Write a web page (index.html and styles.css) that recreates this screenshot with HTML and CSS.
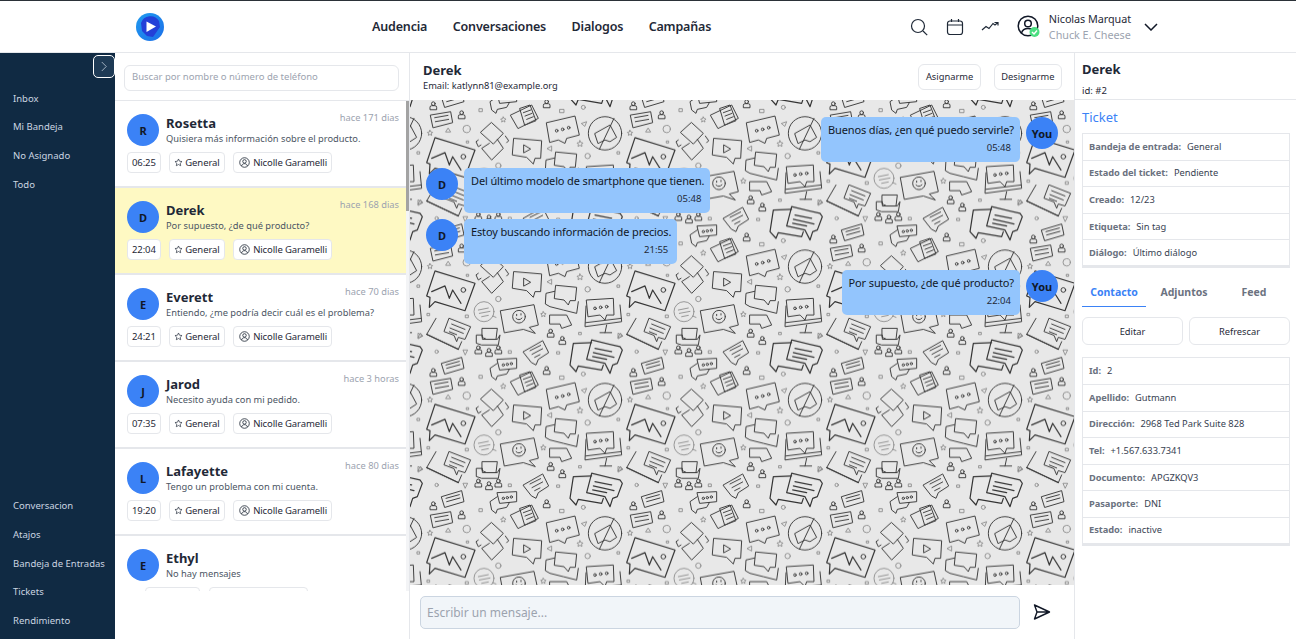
FILE: index.html
```html
<!DOCTYPE html>
<html lang="es">
<head>
  <meta charset="UTF-8" />
  <meta name="viewport" content="width=device-width, initial-scale=1.0" />
  <title>Conversaciones</title>
  <link rel="stylesheet" href="styles.css">
</head>
<body>
  <header class="topbar">
    <svg class="logo" viewBox="0 0 28 28">
      <defs>
        <linearGradient id="logo-grad" x1="0" y1="0" x2="1" y2="1">
          <stop offset="0" stop-color="#1f9bf0" />
          <stop offset="1" stop-color="#1d6fe8" />
        </linearGradient>
      </defs>
      <circle cx="14" cy="14" r="14" fill="url(#logo-grad)" />
      <path d="M5 10a10 10 0 0 1 18-2l1 6-7 10-6-1-5-5z" fill="#2340d8" />
      <path d="M10.5 8.5 20 13.5 10.5 19z" fill="#fff" />
    </svg>
    <nav class="topnav">
      <a>Audencia</a>
      <a>Conversaciones</a>
      <a>Dialogos</a>
      <a>Campañas</a>
    </nav>
    <div class="top-actions">
      <svg class="ico" viewBox="0 0 18 18"><circle cx="8" cy="8" r="6.5" /><path d="M13 13l4.2 4.2" /></svg>
      <svg class="ico" viewBox="0 0 18 18"><rect x="1.5" y="3" width="15" height="13.5" rx="2.5" /><path d="M1.5 7h15M5.5 1v3M12.5 1v3" /></svg>
      <svg class="ico" viewBox="0 0 18 18"><path d="M1 12l4-3.5 3 2 4-5 2 1.5 3-2.5M13.5 4.500h3.500v3" /></svg>
      <div class="profile">
        <svg class="profile-ico" viewBox="0 0 24 24">
          <circle cx="11" cy="11" r="9.800" />
          <circle cx="11" cy="8.500" r="3.300" />
          <path d="M4.500 18c1-3.500 3.500-4.500 6.500-4.500s4.500.5 5.500 2" />
          <circle cx="17.500" cy="17" r="5" class="badge" />
          <path d="M15 17l2 2 3-3.500" class="tick" />
        </svg>
        <div class="profile-text">
          <span>Nicolas Marquat</span>
          <span class="profile-org">Chuck E. Cheese</span>
        </div>
      </div>
      <svg class="chev" viewBox="0 0 14 8"><path d="M1 1l6 6 6-6" /></svg>
    </div>
  </header>

  <div class="app">
    <aside class="sidebar">
      <button class="side-toggle"><svg viewBox="0 0 8 14"><path d="M1 1l6 6-6 6" /></svg></button>
      <div class="side-group">
        <a>Inbox</a>
        <a>Mi Bandeja</a>
        <a>No Asignado</a>
        <a>Todo</a>
      </div>
      <div class="side-group">
        <a>Conversacion</a>
        <a>Atajos</a>
        <a>Bandeja de Entradas</a>
        <a>Tickets</a>
        <a>Rendimiento</a>
      </div>
    </aside>

    <section class="tickets">
      <div class="search-box">
        <input type="text" placeholder="Buscar por nombre o número de teléfono" />
      </div>
      <div class="tickets-body">
        <div class="ticket-list">
          <div class="ticket">
            <div class="avatar">R</div>
            <div class="ticket-main">
              <div class="ticket-top"><h3>Rosetta</h3><span class="ago">hace 171 dias</span></div>
              <p>Quisiera más información sobre el producto.</p>
            </div>
            <div class="chips">
              <span class="chip">06:25</span>
              <span class="chip"><svg class="star" viewBox="0 0 12 12"><use href="#i-star" /></svg>General</span>
              <span class="chip"><svg viewBox="0 0 12 12"><use href="#i-user" /></svg>Nicolle Garamelli</span>
            </div>
          </div>
          <div class="ticket active">
            <div class="avatar">D</div>
            <div class="ticket-main">
              <div class="ticket-top"><h3>Derek</h3><span class="ago">hace 168 dias</span></div>
              <p>Por supuesto, ¿de qué producto?</p>
            </div>
            <div class="chips">
              <span class="chip">22:04</span>
              <span class="chip"><svg class="star" viewBox="0 0 12 12"><use href="#i-star" /></svg>General</span>
              <span class="chip"><svg viewBox="0 0 12 12"><use href="#i-user" /></svg>Nicolle Garamelli</span>
            </div>
          </div>
          <div class="ticket">
            <div class="avatar">E</div>
            <div class="ticket-main">
              <div class="ticket-top"><h3>Everett</h3><span class="ago">hace 70 dias</span></div>
              <p>Entiendo, ¿me podría decir cuál es el problema?</p>
            </div>
            <div class="chips">
              <span class="chip">24:21</span>
              <span class="chip"><svg class="star" viewBox="0 0 12 12"><use href="#i-star" /></svg>General</span>
              <span class="chip"><svg viewBox="0 0 12 12"><use href="#i-user" /></svg>Nicolle Garamelli</span>
            </div>
          </div>
          <div class="ticket">
            <div class="avatar">J</div>
            <div class="ticket-main">
              <div class="ticket-top"><h3>Jarod</h3><span class="ago">hace 3 horas</span></div>
              <p>Necesito ayuda con mi pedido.</p>
            </div>
            <div class="chips">
              <span class="chip">07:35</span>
              <span class="chip"><svg class="star" viewBox="0 0 12 12"><use href="#i-star" /></svg>General</span>
              <span class="chip"><svg viewBox="0 0 12 12"><use href="#i-user" /></svg>Nicolle Garamelli</span>
            </div>
          </div>
          <div class="ticket">
            <div class="avatar">L</div>
            <div class="ticket-main">
              <div class="ticket-top"><h3>Lafayette</h3><span class="ago">hace 80 dias</span></div>
              <p>Tengo un problema con mi cuenta.</p>
            </div>
            <div class="chips">
              <span class="chip">19:20</span>
              <span class="chip"><svg class="star" viewBox="0 0 12 12"><use href="#i-star" /></svg>General</span>
              <span class="chip"><svg viewBox="0 0 12 12"><use href="#i-user" /></svg>Nicolle Garamelli</span>
            </div>
          </div>
          <div class="ticket">
            <div class="avatar">E</div>
            <div class="ticket-main">
              <div class="ticket-top"><h3>Ethyl</h3></div>
              <p>No hay mensajes</p>
            </div>
            <div class="chips chips-end">
              <span class="chip"><svg class="star" viewBox="0 0 12 12"><use href="#i-star" /></svg>General</span>
              <span class="chip"><svg viewBox="0 0 12 12"><use href="#i-user" /></svg>Nicolle Garamelli</span>
            </div>
          </div>
        </div>
        <div class="scroll-track"><div class="scroll-thumb"></div></div>
      </div>
    </section>

    <section class="chat">
      <div class="chat-head">
        <div class="chat-who">
          <h2>Derek</h2>
          <span>Email: katlynn81@example.org</span>
        </div>
        <button class="btn">Asignarme</button>
        <button class="btn">Designarme</button>
      </div>

      <div class="chat-body">
        <!-- doodle wallpaper, tile coords are 3x, scaled down below -->
        <svg class="wallpaper" width="100%" height="100%">
          <defs>
            <g id="d-person">
              <circle cx="0" cy="-7" r="5.500" />
              <path d="M-10 10V4q0-5 5-5H5q5 0 5 5v6z" />
            </g>
            <g id="d-tile" class="doodle">
              <path class="thick" d="M75 313 195 350 165 432 75 405 58 422 60 392 50 388z" />
              <path class="thick" d="M65 375 105 358 118 395 128 370 153 410" /><circle cx="160" cy="370" r="7" />
              <g class="pale"><circle cx="222" cy="35" r="30" /><path d="M205 30 235 24M208 40 240 34M215 50 235 46M248 48 258 52" /></g>
              <path d="M272 32 372 14 385 75 358 82 376 100 340 88 284 98z" />
              <circle cx="327" cy="50" r="19" /><path d="M318 55q9 9 18-1M320 43v4M333 41v4" />
              <path d="M78 55 50 103 145 148 155 125" /><path class="thick" d="M50 103 145 148" />
              <path d="M118 55 182 80 165 118 145 112 140 125 132 106 103 95z" /><path d="M125 72 165 88M120 84 160 100M118 95 140 104" />
              <path d="M217 85 262 85 258 118 230 118 217 112z" /><path d="M200 105 217 105 217 118 262 118 270 105 265 135 215 135 200 130z" />
              <use href="#d-person" x="205" y="150" /><use href="#d-person" x="237" y="158" /><use href="#d-person" x="265" y="150" />
              <path d="M340 155 398 122 416 158 385 178 378 195 365 188z" /><path d="M360 152 392 136M366 163 398 146M374 172 390 164" />
              <use href="#d-person" x="410" y="212" />
              <path d="M262 178 320 175 320 205 270 210z" /><path d="M262 190 240 205 245 230 258 240 262 228 290 222 298 208" />
              <circle cx="280" cy="195" r="3.500" /><circle cx="292" cy="193" r="3.500" /><circle cx="304" cy="191" r="3.500" />
              <path d="M302 245 365 215 385 255 325 285z" /><path d="M330 225 360 215 378 262 345 275z" /><path d="M340 238 362 230M345 248 366 240M350 258 370 250" />
              <path class="thick" d="M490 130 545 128M490 130 480 195 498 215 505 198 575 210 580 195" />
              <path class="thick" d="M545 120 630 140 637 150 622 190 608 195 600 220 585 190 530 178z" />
              <path class="thick" d="M555 145 605 155M550 158 612 172M548 170 590 178" />
              <path d="M95 190 155 172 162 205 105 222z" /><path d="M108 195 148 184M110 205 150 194" />
              <path d="M62 245 122 235 128 268 70 283z" /><path d="M74 253 114 246M76 265 116 258" />
              <use href="#d-person" x="70" y="218" /><use href="#d-person" x="155" y="245" />
              <path d="M410 268 495 248 508 305 470 315 465 330 445 320 420 327z" />
              <circle cx="440" cy="292" r="4" /><circle cx="458" cy="288" r="4" /><circle cx="476" cy="283" r="4" />
              <circle cx="585" cy="300" r="50" /><path d="M555 300 600 275 620 312 600 325 585 320 565 330z" /><path d="M612 255 568 348" />
              <path d="M245 268 280 300 250 332 212 298z" /><path d="M238 330 215 345 245 380 280 345 262 318" />
              <path d="M205 320 198 325 205 340 213 335M290 328 296 322 286 308" />
              <path d="M312 315 395 322 392 375 375 375 370 392 350 372 308 365z" /><path d="M342 335 362 347 342 358z" />
              <path d="M438 356 500 362 496 402 480 402 475 415 462 400 434 396z" /><path d="M434 374 408 380 406 412 420 420 460 430 500 440 505 405" />
              <path d="M530 0 610 -5 612 45 590 45 585 60 570 45 535 50z" /><path d="M528 18 525 80 635 65 630 15" /><path d="M527 68 633 55M590 75 585 98M570 98 605 98" />
              <circle cx="555" cy="25" r="4" /><circle cx="572" cy="22" r="4" /><circle cx="590" cy="20" r="4" />
              <path d="M420 45 470 45 485 75 455 85 450 72 420 72z" />
              <use href="#d-person" x="422" y="100" /><use href="#d-person" x="457" y="122" />
              <g class="pale">
                <path d="M25 100 38 108 25 116zM160 150 173 150 166 164zM108 296 122 296 115 285zM515 270 530 265 525 278zM412 345 425 338 425 352zM625 112 638 108 632 100z" />
                <circle cx="170" cy="287" r="11" /><circle cx="265" cy="397" r="8" /><circle cx="533" cy="368" r="8" /><circle cx="520" cy="222" r="6" /><circle cx="80" cy="155" r="5" />
                <path d="M60 291 63 296 68 297 64 301 65 306 60 303 55 306 56 301 52 297 57 296zM510 322 513 328 519 329 515 333 516 339 510 336 504 339 505 333 501 329 507 328zM400 35 403 40 408 41 404 45 405 50 400 47 395 50 396 45 392 41 397 40zM280 251 283 256 288 257 284 261 285 266 280 263 275 266 276 261 272 257 277 256z" />
                <rect x="52" y="40" width="7" height="7" /><rect x="167" y="45" width="8" height="8" /><rect x="208" y="226" width="9" height="9" /><rect x="441" y="155" width="8" height="7" /><rect x="450" y="228" width="12" height="10" /><rect x="296" y="152" width="8" height="8" /><rect x="507" y="97" width="7" height="7" /><rect x="622" y="355" width="7" height="7" /><rect x="170" y="323" width="6" height="6" />
              </g>
            </g>
            <pattern id="wall" patternUnits="userSpaceOnUse" width="200" height="133.333" y="66.667">
              <g transform="scale(.33333)">
                <use href="#d-tile" />
                <use href="#d-tile" x="-600" />
                <use href="#d-tile" x="600" />
                <use href="#d-tile" y="-400" />
                <use href="#d-tile" y="400" />
                <use href="#d-tile" x="-600" y="400" />
                <use href="#d-tile" x="600" y="-400" />
              </g>
            </pattern>
          </defs>
          <rect width="100%" height="100%" fill="url(#wall)" />
        </svg>

        <div class="messages">
          <div class="msg mine">
            <div class="bubble"><p>Buenos días, ¿en qué puedo servirle?</p><time>05:48</time></div>
            <div class="avatar">You</div>
          </div>
          <div class="msg">
            <div class="avatar">D</div>
            <div class="bubble"><p>Del último modelo de smartphone que tienen.</p><time>05:48</time></div>
          </div>
          <div class="msg">
            <div class="avatar">D</div>
            <div class="bubble"><p>Estoy buscando información de precios.</p><time>21:55</time></div>
          </div>
          <div class="msg mine">
            <div class="bubble"><p>Por supuesto, ¿de qué producto?</p><time>22:04</time></div>
            <div class="avatar">You</div>
          </div>
        </div>
      </div>

      <div class="composer">
        <input type="text" placeholder="Escribir un mensaje..." />
        <svg class="send" viewBox="0 0 18 18"><path d="M1.500 2 16.500 9 1.500 16 4 9zM4 9h12.500" /></svg>
      </div>
    </section>

    <aside class="details">
      <div class="details-head">
        <h2>Derek</h2>
        <span>id: #2</span>
      </div>
      <div class="details-body">
        <h4 class="ticket-title">Ticket</h4>
        <dl class="info">
          <div><dt>Bandeja de entrada:</dt><dd>General</dd></div>
          <div><dt>Estado del ticket:</dt><dd>Pendiente</dd></div>
          <div><dt>Creado:</dt><dd>12/23</dd></div>
          <div><dt>Etiqueta:</dt><dd>Sin tag</dd></div>
          <div><dt>Diálogo:</dt><dd>Último diálogo</dd></div>
        </dl>
        <div class="tabs">
          <a class="tab on">Contacto</a>
          <a class="tab">Adjuntos</a>
          <a class="tab">Feed</a>
        </div>
        <div class="detail-btns">
          <button class="btn">Editar</button>
          <button class="btn">Refrescar</button>
        </div>
        <dl class="info">
          <div><dt>Id:</dt><dd>2</dd></div>
          <div><dt>Apellido:</dt><dd>Gutmann</dd></div>
          <div><dt>Dirección:</dt><dd>2968 Ted Park Suite 828</dd></div>
          <div><dt>Tel:</dt><dd>+1.567.633.7341</dd></div>
          <div><dt>Documento:</dt><dd>APGZKQV3</dd></div>
          <div><dt>Pasaporte:</dt><dd>DNI</dd></div>
          <div><dt>Estado:</dt><dd>inactive</dd></div>
        </dl>
      </div>
    </aside>
  </div>

  <svg class="sprites" width="0" height="0">
    <g id="i-star"><path d="M6 1.300 7.400 4.300 10.700 4.700 8.300 7 8.900 10.300 6 8.700 3.100 10.300 3.700 7 1.300 4.700 4.600 4.300z" /></g>
    <g id="i-user"><circle cx="6" cy="6" r="5.200" /><circle cx="6" cy="4.800" r="1.900" /><path d="M2.800 9.800c.6-2 1.800-2.500 3.200-2.500s2.600.5 3.200 2.500" /></g>
  </svg>
</body>
</html>
```

FILE: styles.css
```css
* {
  box-sizing: border-box;
}
html, body {
  height: 100%;
}
body {
  margin: 0;
  font-family: "Noto Sans", sans-serif;
  color: #1f2937;
  background: #fff;
  overflow: hidden;
  display: flex;
  flex-direction: column;
}
h2, h3, h4, p, dl, dd {
  margin: 0;
}
button {
  font-family: inherit;
}
.sprites {
  position: absolute;
}

/* top bar */
.topbar {
  height: 53px;
  flex: none;
  display: flex;
  align-items: center;
  padding-left: 136px;
  border-top: 1px solid #2b3138;
  border-bottom: 1px solid #e5e7eb;
}
.logo {
  width: 28px;
  height: 28px;
}
.topnav {
  display: flex;
  gap: 25.500px;
  margin: 0 0 1px 208px;
  font-size: 12.5px;
  letter-spacing: -.17px;
  font-weight: 600;
  color: #1f2937;
}
.top-actions {
  display: flex;
  align-items: center;
  margin-left: auto;
  margin-right: 138px;
}
.ico {
  width: 18px;
  height: 18px;
  margin-right: 17.500px;
  fill: none;
  stroke: #1f2937;
  stroke-width: 1.2;
}
.profile {
  display: flex;
  align-items: center;
  gap: 8px;
}
.profile-ico {
  width: 24px;
  height: 24px;
  fill: none;
  stroke: #111827;
  stroke-width: 1.5;
}
.profile-ico .badge {
  fill: #4ade80;
  stroke: none;
}
.profile-ico .tick {
  stroke: #fff;
  stroke-width: 1.4;
}
.profile-text {
  display: flex;
  flex-direction: column;
  gap: 1px;
  font-size: 10.800px;
  letter-spacing: -.05px;
  line-height: 15px;
}
.profile-org {
  color: #9ca3af;
}
.chev {
  width: 14px;
  height: 8px;
  margin-left: 13px;
  fill: none;
  stroke: #111827;
  stroke-width: 1.5;
}

.app {
  flex: 1;
  min-height: 0;
  display: flex;
}

/* left nav */
.sidebar {
  width: 115px;
  flex: none;
  position: relative;
  background: #102a43;
  color: #cbd5e1;
  font-size: 9.500px;
  display: flex;
  flex-direction: column;
  justify-content: space-between;
  padding: 31.500px 0 3px 13px;
}
.side-group {
  display: flex;
  flex-direction: column;
}
.side-group a {
  height: 28.800px;
  line-height: 28.800px;
}
.side-toggle {
  position: absolute;
  top: 2px;
  right: 0;
  width: 22px;
  height: 23px;
  padding: 0;
  background: #1e3a55;
  border: 1.500px solid #fff;
  border-radius: 5px;
  display: flex;
  align-items: center;
  justify-content: center;
}
.side-toggle svg {
  width: 6px;
  height: 11px;
  fill: none;
  stroke: #cbd5e1;
  stroke-width: 1;
}

/* ticket list */
.tickets {
  width: 295px;
  flex: none;
  display: flex;
  flex-direction: column;
  border-right: 1px solid #e5e7eb;
}
.search-box {
  height: 48px;
  flex: none;
  padding: 10px 10px 0 9px;
  border-bottom: 1px solid #e5e7eb;
}
.search-box input {
  width: 100%;
  height: 26px;
  padding: 0 7px 3px;
  border: 1px solid #e5e7eb;
  border-radius: 6px;
  font: 9.5px "Noto Sans", sans-serif;
}
.search-box input::placeholder {
  color: #9ca3af;
}
.tickets-body {
  height: 490px;
  display: flex;
  overflow: hidden;
}
.ticket-list {
  flex: 1;
  min-width: 0;
}
.ticket {
  height: 87px;
  padding: 13px 7px 0 12px;
  border-bottom: 2px solid #e5e7eb;
  display: grid;
  grid-template-columns: 32px 1fr;
  column-gap: 7px;
  grid-template-rows: 32px auto;
  row-gap: 6px;
}
.ticket.active {
  background: #fef9c3;
}
.avatar {
  width: 32px;
  height: 32px;
  flex: none;
  border-radius: 50%;
  background: #3b82f6;
  color: #111827;
  font-size: 11px;
  font-weight: 700;
  display: flex;
  align-items: center;
  justify-content: center;
}
.ticket-main {
  min-width: 0;
}
.ticket-top {
  display: flex;
  justify-content: space-between;
  align-items: flex-start;
  height: 18px;
}
.ticket-top h3 {
  font-size: 13px;
  line-height: 18px;
  font-weight: 700;
  color: #1f2937;
}
.ago {
  font-size: 9.300px;
  color: #9ca3af;
  line-height: 12px;
  margin-top: -2px;
}
.ticket p {
  font-size: 9.300px;
  line-height: 13px;
  color: #4b5563;
}
.chips {
  grid-column: 1 / -1;
  display: flex;
  gap: 8.500px;
}
.chips-end {
  padding-left: 18px;
}
.chip {
  height: 21px;
  padding: 0 4px;
  display: flex;
  align-items: center;
  gap: 2px;
  background: #fff;
  border: 1px solid #e5e7eb;
  border-radius: 4px;
  font-size: 9.500px;
  letter-spacing: -.1px;
  color: #1f2937;
}
.chip svg {
  width: 11px;
  height: 11px;
  margin: 0 1px;
  fill: none;
  stroke: #1f2937;
  stroke-width: .9;
}
.chip svg.star {
  width: 9px;
  height: 9px;
  margin: 0;
}
.scroll-track {
  width: 3px;
  flex: none;
  background: #f3f4f6;
}
.scroll-thumb {
  width: 100%;
  height: 110px;
  background: #a3a3a3;
}

/* chat */
.chat {
  width: 665px;
  flex: none;
  display: flex;
  flex-direction: column;
  border-right: 1px solid #e5e7eb;
}
.chat-head {
  height: 47px;
  flex: none;
  display: flex;
  align-items: center;
  gap: 13px;
  padding: 0 12px 0 13px;
}
.chat-who {
  flex: 1;
  display: flex;
  flex-direction: column;
  font-size: 9.300px;
  line-height: 14px;
  color: #1f2937;
}
.chat-who h2,
.details-head h2 {
  font-size: 13px;
  line-height: 18px;
  font-weight: 700;
}
.btn {
  height: 26px;
  padding: 0 6.500px;
  background: #fff;
  border: 1px solid #e5e7eb;
  border-radius: 6px;
  font-size: 9.300px;
  color: #1f2937;
}
.chat-body {
  flex: 1;
  min-height: 0;
  position: relative;
  background: #e8e8e8;
}
.wallpaper {
  position: absolute;
  top: 0;
  left: 0;
}
.doodle {
  fill: none;
  stroke: #333;
  stroke-width: 2.800;
  stroke-linejoin: round;
  stroke-linecap: round;
}
.doodle .thick {
  stroke-width: 3.600;
}
.doodle .pale {
  stroke: #808080;
  stroke-width: 2.400;
}
.messages {
  position: relative;
  display: flex;
  flex-direction: column;
  gap: 6px;
  padding: 17px 16px;
}
.msg {
  display: flex;
  gap: 6px;
  align-items: flex-start;
}
.msg.mine {
  justify-content: flex-end;
}
.bubble {
  padding: 4px 6px 7px 7px;
  background: #93c5fd;
  border-radius: 5px;
  color: #111827;
}
.bubble p {
  font-size: 11px;
  letter-spacing: -.13px;
  line-height: 18px;
}
.bubble time {
  display: block;
  text-align: right;
  padding-right: 3px;
  margin-top: 2px;
  font-size: 9.5px;
  line-height: 14px;
  color: #1f2937;
}
.composer {
  height: 54px;
  flex: none;
  display: flex;
  align-items: center;
  padding: 0 23px 0 10px;
  gap: 13px;
}
.composer input {
  flex: 1;
  height: 33px;
  padding: 0 6px;
  background: #f1f5f9;
  border: 1px solid #cbd5e1;
  border-radius: 5px;
  font: 12px "Noto Sans", sans-serif;
}
.composer input::placeholder {
  color: #9ca3af;
}
.send {
  width: 18px;
  height: 18px;
  fill: none;
  stroke: #111827;
  stroke-width: 1.4;
  stroke-linejoin: round;
}

/* right panel */
.details {
  flex: 1;
  min-width: 0;
  display: flex;
  flex-direction: column;
}
.details-head {
  height: 47px;
  flex: none;
  padding: 7px 6px 0 7px;
  border-bottom: 1px solid #e5e7eb;
  font-size: 9.5px;
  display: flex;
  flex-direction: column;
  gap: 6px;
}
.details-body {
  padding: 8px 6px 0 7px;
}
.ticket-title {
  font-size: 13px;
  line-height: 18px;
  font-weight: 400;
  color: #3b82f6;
  margin-bottom: 7px;
}
.info {
  border: 1px solid #e5e7eb;
}
.info > div {
  height: 26.600px;
  padding: 0 0 1px 6px;
  display: flex;
  align-items: center;
  gap: 6px;
  font-size: 9.300px;
  border-bottom: 1px solid #e5e7eb;
}
.info > div:last-child {
  height: 27px;
  border-bottom-width: 2px;
}
.info dt {
  font-weight: 700;
  letter-spacing: -.05px;
  color: #6b7280;
}
.info dd {
  color: #374151;
}
.tabs {
  display: grid;
  grid-template-columns: 64px 76px 64px;
  margin-top: 11px;
  height: 25px;
  font-size: 10.5px;
  font-weight: 700;
  color: #6b7280;
}
.tab {
  text-align: center;
  line-height: 27px;
}
.tab.on {
  color: #3b82f6;
  border-bottom: 1px solid #3b82f6;
}
.detail-btns {
  display: grid;
  grid-template-columns: 1fr 1fr;
  gap: 6px;
  margin: 13px 0 12px;
}
.detail-btns .btn {
  height: 28px;
}
```
